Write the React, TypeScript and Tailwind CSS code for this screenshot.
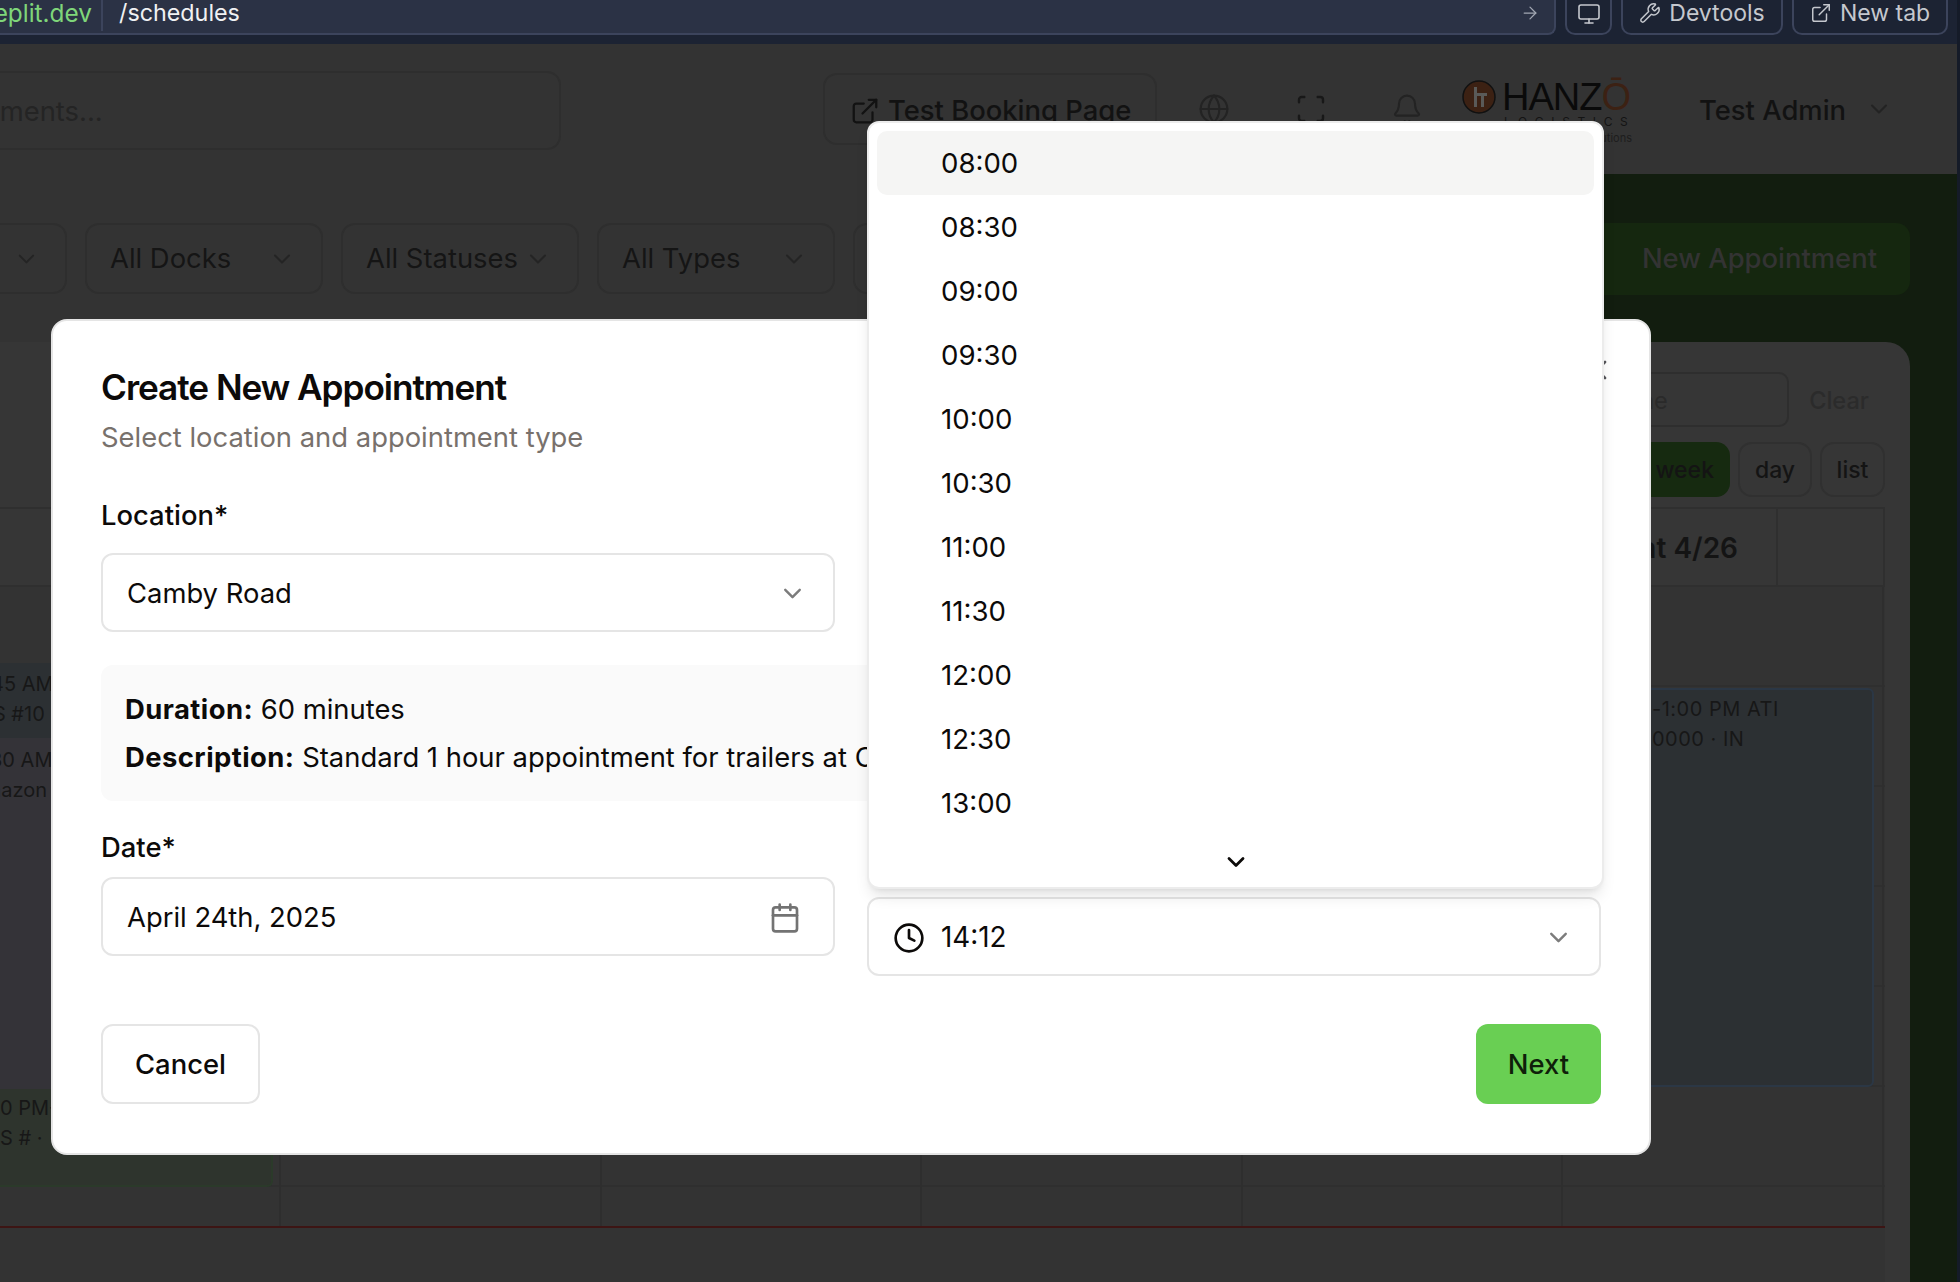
import {
  ArrowRight,
  Bell,
  Calendar,
  ChevronDown,
  Clock,
  ExternalLink,
  Globe,
  Monitor,
  Scan,
  Wrench,
  X,
} from 'lucide-react';

const times = ['08:00', '08:30', '09:00', '09:30', '10:00', '10:30', '11:00', '11:30', '12:00', '12:30', '13:00'];
const columns = [0, 1, 2, 3, 4, 5];
const rows = [0, 1, 2, 3, 4, 5];

function BrowserBar() {
  return (
    <div className="flex h-[44px] shrink-0 items-start gap-[9px] bg-[#1c2333] pr-[9px] text-[23px] leading-none">
      <div className="flex h-[35px] flex-1 items-center rounded-br-[8px] border-b-2 border-r-2 border-[#3c445c] bg-[#2b3245] pb-[7px]">
        <div className="flex h-[35px] w-[103px] shrink-0 items-center justify-end overflow-hidden border-r-2 border-[#3c445c] pt-[1px] pr-[9px] text-[24.4px] text-[#7fd67a]">
          <span className="whitespace-nowrap">booking.replit.dev</span>
        </div>
        <span className="ml-[16px] text-[23.3px] text-[#f0f1f3]">/schedules</span>
        <ArrowRight size={20} className="ml-auto mr-[14px] text-[#a3a8b3]" strokeWidth={1.5} />
      </div>
      <div className="flex h-[35px] w-[47px] items-center justify-center rounded-b-[10px] border-x-2 border-b-2 border-[#3c445c] pb-[6px] text-[#c5c8ce]">
        <Monitor size={24} strokeWidth={1.6} />
      </div>
      <div className="flex h-[35px] w-[162px] items-center justify-center gap-[8px] rounded-b-[10px] border-x-2 border-b-2 border-[#3c445c] pb-[7px] text-[#c5c8ce]">
        <Wrench size={22} strokeWidth={1.6} />
        <span>Devtools</span>
      </div>
      <div className="flex h-[35px] w-[156px] items-center justify-center gap-[8px] rounded-b-[10px] border-x-2 border-b-2 border-[#3c445c] pb-[7px] text-[#c5c8ce]">
        <ExternalLink size={22} strokeWidth={1.6} />
        <span>New tab</span>
      </div>
    </div>
  );
}

function Logo() {
  return (
    <div className="ml-[39px] mt-[36px] flex h-[80px] w-[170px] shrink-0 flex-col self-start">
      <div className="flex items-center gap-[6px]">
        <svg width="34" height="34" viewBox="0 0 34 34">
          <circle cx="17" cy="17" r="16" fill="#3c2113" stroke="#111" strokeWidth="1.5" />
          <path d="M12 7v20h3V7zM15 13h10v3h-3v11h-3V16h-4z" fill="#5a5a58" />
        </svg>
        <span className="font-[Liberation_Sans,sans-serif] text-[38px] leading-[34px] tracking-[-1px] text-[#0a0a0a]">
          HANZ<span className="text-[#3c2113]">Ō</span>
        </span>
      </div>
      <span className="ml-[42px] mt-[1px] whitespace-nowrap text-[12px] leading-[14px] tracking-[7.6px] text-[#141414]">LOGISTICS</span>
      <span className="mt-[2px] self-end whitespace-nowrap text-[11px] leading-[14px] text-[#1d1d1d]">Logistics Solutions</span>
    </div>
  );
}

function Header() {
  return (
    <div className="flex h-[130px] shrink-0 items-center bg-[#333333] text-[27.4px] text-[#121212]">
      <div className="-ml-[240px] mt-[2px] flex h-[79px] w-[801px] shrink-0 items-center rounded-[14px] border-2 border-[#2e2e2e] pl-[42px] pt-[3px] text-[#242424]">
        Search appointments...
      </div>
      <div className="ml-[262px] flex h-[72px] w-[334px] shrink-0 items-center gap-[8px] rounded-[14px] border-2 border-[#2e2e2e] pl-[25px] pt-[3px]">
        <ExternalLink size={30} strokeWidth={1.8} />
        <span className="font-medium">Test Booking Page</span>
      </div>
      <Globe size={32} strokeWidth={1.6} className="ml-[41px] shrink-0 text-[#232323]" />
      <Scan size={32} strokeWidth={1.8} className="ml-[65px] shrink-0 text-[#181818]" />
      <Bell size={32} strokeWidth={1.6} className="ml-[64px] shrink-0 text-[#232323]" />
      <Logo />
      <span className="ml-[67px] shrink-0 pt-[3px] font-medium">Test Admin</span>
      <ChevronDown size={28} className="ml-[19px] shrink-0 text-[#232323]" strokeWidth={1.8} />
    </div>
  );
}

function Filter({ label, className = 'w-[238px]' }: { label: string; className?: string }) {
  return (
    <div className={`flex h-[71px] shrink-0 items-center justify-between rounded-[14px] border-2 border-[#2e2e2e] pl-[23px] pr-[25px] text-[27.4px] text-[#151515] ${className}`}>
      <span>{label}</span>
      <ChevronDown size={28} strokeWidth={1.8} className="text-[#242424]" />
    </div>
  );
}

function Toolbar() {
  return (
    <div className="flex h-[169px] shrink-0 items-start pt-[49px]">
      <div className="flex flex-1 gap-[18px] overflow-hidden">
        <Filter label="All Locations" className="-ml-[171px] w-[238px]" />
        <Filter label="All Docks" />
        <Filter label="All Statuses" />
        <Filter label="All Types" />
        <Filter label="All Carriers" />
      </div>
      <div className="flex h-[72px] w-[330px] items-center justify-end rounded-[14px] bg-[#15270f] pr-[33px] text-[27.4px] font-medium text-[#333333]">
        New Appointment
      </div>
      <div className="w-[47px]" />
    </div>
  );
}

function CalendarCard() {
  return (
    <div className="-ml-[40px] -mt-[1px] mr-[47px] flex-1 rounded-tr-[24px] bg-[#363636] pl-[40px] pr-[25px] pt-[30px]">
      <div className="flex justify-end gap-[6px]">
        <div className="flex h-[55px] w-[400px] items-center rounded-[10px] border-2 border-[#2e2e2e] pl-[16px] pt-[2px] text-[23.6px] text-[#2a2a2a]">
          Search by carrier name
        </div>
        <div className="flex h-[55px] w-[90px] items-center justify-end rounded-[10px] pr-[16px] pt-[2px] text-[23.6px] font-medium text-[#2b2b2b]">
          Clear
        </div>
      </div>
      <div className="mt-[15px] flex justify-end gap-[8px] text-[23px] font-medium text-[#141414]">
        <div className="flex h-[55px] w-[120px] items-center justify-end rounded-[14px] bg-[#162a10] pr-[16px] pt-[2px]">week</div>
        <div className="flex h-[55px] w-[74px] items-center justify-center rounded-[14px] border-2 border-[#303030] pt-[2px]">day</div>
        <div className="flex h-[55px] w-[65px] items-center justify-center rounded-[14px] border-2 border-[#303030] pt-[2px]">list</div>
      </div>
      <div className="relative mt-[10px] h-[800px] bg-[#333333]">
        <div className="flex h-[80px] justify-end border-y-2 border-[#2f2f2f] bg-[#363636]">
          <div className="flex w-[400px] items-center justify-end border-r-2 border-[#2f2f2f] pr-[38px] pt-[2px] text-[28px] font-semibold text-[#141414]">
            Sat 4/26
          </div>
          <div className="w-[107px] border-r-2 border-[#2f2f2f]" />
        </div>
        {rows.map((row) => (
          <div key={row} className="h-[100px] border-b-2 border-[#2f2f2f]" />
        ))}
        <div className="absolute inset-y-[80px] right-[1px] flex w-full justify-end">
          {columns.map((column) => (
            <div key={column} className="w-[320.6px] shrink-0 border-r-2 border-[#2e2e2e]" />
          ))}
        </div>
        <div className="absolute left-0 right-0 top-[719px] h-[2px] bg-[#3d1514]" />
        {/* events, mostly covered by the dialog */}
        <div className="absolute left-0 top-[156px] h-[75px] w-[273px] bg-[#2c3033]" />
        <div className="absolute left-[1420px] top-[181px] h-[399px] w-[454px] rounded-[6px] border-2 border-[#2b3745] bg-[#2c3033]" />
        <div className="absolute left-[1652px] top-[187px] text-[20px] leading-[30px] tracking-[0.5px] text-[#171717]">
          <div>-1:00 PM ATI</div>
          <div>0000 · IN</div>
        </div>
        <div className="absolute left-0 top-[231px] h-[351px] w-[273px] bg-[#343338]" />
        <div className="absolute left-0 top-[582px] h-[98px] w-[273px] rounded-br-[6px] border-b-2 border-r-2 border-[#2b3a2a] bg-[#2e342d]" />
        <div className="absolute -left-[20px] top-[162px] flex w-[90px] flex-col text-[20px] leading-[30px] text-[#171717]">
          <span className="ml-[11px]">45 AM</span>
          <span>TS #10</span>
          <span className="ml-[10px] mt-[16px]">30 AM</span>
          <span className="-ml-[10px]">Amazon</span>
        </div>
        <div className="absolute left-0 top-[586px] flex flex-col text-[20px] leading-[30px] text-[#171717]">
          <span>0 PM-</span>
          <span>S # ·</span>
        </div>
      </div>
    </div>
  );
}

function TimeMenu() {
  return (
    <div className="absolute left-[867px] top-[121px] z-20 h-[768px] w-[737px] overflow-hidden rounded-[12px] border-2 border-[#ececec] bg-white p-[8px] text-[27.6px] leading-none text-[#0c0a09] shadow-lg">
      {times.map((time, index) => (
        <div
          key={time}
          className={`flex h-[64px] items-center rounded-[10px] pl-[64px] pt-[1px] ${index === 0 ? 'bg-[#f5f5f4]' : ''}`}
        >
          {time}
        </div>
      ))}
      <div className="flex h-[52px] items-center justify-center pt-[2px]">
        <ChevronDown size={28} strokeWidth={2.4} />
      </div>
    </div>
  );
}

function Dialog() {
  return (
    <div className="absolute left-[51px] top-[319px] z-10 flex h-[836px] w-[1600px] flex-col rounded-[16px] border-2 border-[#e5e5e5] bg-white px-[48px] pt-[46px] text-[#0c0a09]">
      <X size={32} className="absolute right-[36px] top-[33px] text-[#55555a]" strokeWidth={2} />
      <h2 className="text-[35.2px] font-semibold leading-[40px] tracking-[-1.05px]">Create New Appointment</h2>
      <p className="mt-[10px] text-[27.4px] leading-[40px] text-[#78716c]">Select location and appointment type</p>

      <label className="mt-[38px] text-[27.4px] font-medium leading-[40px]">Location*</label>
      <div className="mt-[18px] flex h-[79px] w-[734px] items-center justify-between rounded-[12px] border-2 border-[#e5e5e5] pl-[24px] pr-[26px] pt-[2px] text-[27.4px]">
        <span>Camby Road</span>
        <ChevronDown size={29} strokeWidth={2} className="text-[#7c7c7c]" />
      </div>

      <div className="mt-[33px] h-[136px] rounded-[12px] bg-[#fafafa] px-[24px] pt-[24px] text-[27.4px] leading-[40px]">
        <p>
          <strong className="font-bold tracking-[0.45px]">Duration:</strong> 60 minutes
        </p>
        <p className="mt-[8px] whitespace-nowrap">
          <strong className="font-bold tracking-[0.45px]">Description:</strong> Standard 1 hour appointment for trailers at Camby Road
        </p>
      </div>

      <div className="mt-[26px] flex gap-[32px]">
        <div className="w-[734px]">
          <label className="block text-[27.4px] font-medium leading-[40px]">Date*</label>
          <div className="mt-[10px] flex h-[79px] items-center justify-between rounded-[12px] border-2 border-[#e5e5e5] pl-[24px] pr-[32px] pt-[2px] text-[27.4px]">
            <span>April 24th, 2025</span>
            <Calendar size={32} strokeWidth={2} className="text-[#737373]" />
          </div>
        </div>
        <div className="flex-1 pt-[70px]">
          <div className="flex h-[79px] items-center gap-[16px] rounded-[12px] border-2 border-[#e5e5e5] pl-[24px] pr-[26px] pt-[2px] text-[27.8px]">
            <Clock size={32} strokeWidth={2} />
            <span>14:12</span>
            <ChevronDown size={29} strokeWidth={2} className="ml-auto text-[#7c7c7c]" />
          </div>
        </div>
      </div>

      <div className="mt-[48px] flex justify-between text-[27.4px] font-medium">
        <div className="flex h-[80px] w-[159px] items-center justify-center rounded-[12px] border-2 border-[#e5e5e5] pt-[2px]">Cancel</div>
        <div className="flex h-[80px] w-[125px] items-center justify-center rounded-[12px] bg-[#69cf53] pt-[2px] text-[#0f1f0a]">Next</div>
      </div>
    </div>
  );
}

export default function App() {
  return (
    <div className="relative flex h-[1282px] w-[1960px] overflow-hidden bg-[#151b28] font-[Inter,sans-serif]">
      <div className="flex w-[1957px] flex-col bg-[#333333]">
        <BrowserBar />
        <Header />
        <div className="flex min-h-0 flex-1 flex-col bg-[linear-gradient(90deg,#333333_0,#333333_1500px,#121d0f_1500px)]">
          <Toolbar />
          <div className="flex min-h-0 flex-1">
            <CalendarCard />
          </div>
        </div>
      </div>
      <Dialog />
      <TimeMenu />
    </div>
  );
}
